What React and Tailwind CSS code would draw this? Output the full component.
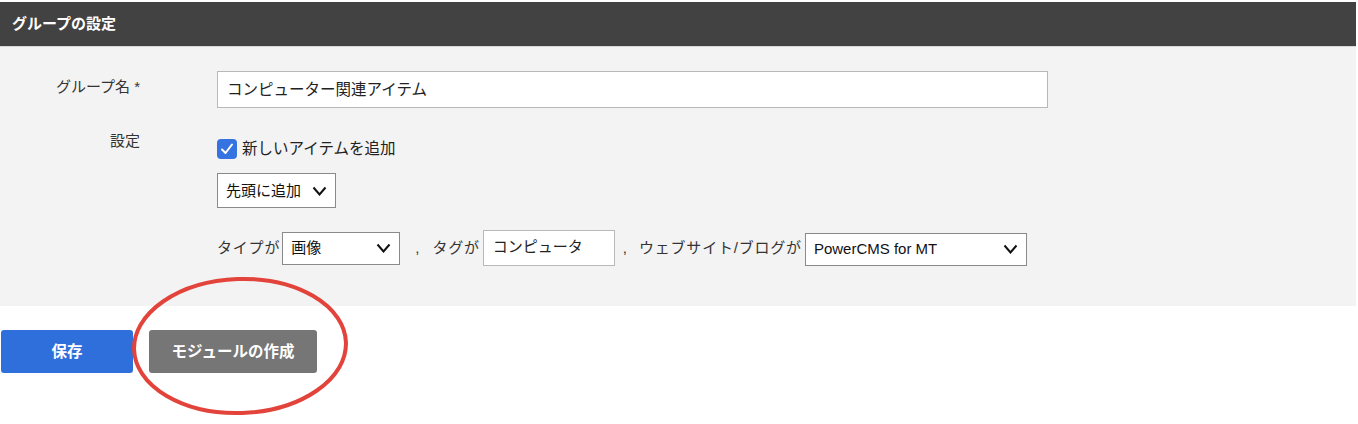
import React from 'react'

const font = { fontFamily: '"Liberation Sans", "Noto Sans CJK JP", sans-serif' }

const Chevron = ({ className = '' }) => (
  <svg className={className} width="15" height="10" viewBox="0 0 15 10" fill="none">
    <polyline points="1.5,1.5 7.5,8.5 13.5,1.5" stroke="#111" strokeWidth="2" strokeLinejoin="miter" />
  </svg>
)

const Select = ({ value, className = '' }) => (
  <div className={`flex items-center justify-between bg-white border border-[#8a8a8a] pl-[8px] pr-[8px] text-[15px] text-[#111] ${className}`}>
    <span>{value}</span>
    <Chevron />
  </div>
)

const App = () => {
  return (
    <div className="relative w-[1358px] h-[424px] bg-white" style={font}>
      <div className="w-[1356px] pt-[2px]">
        {/* Header */}
        <div className="h-[45px] bg-[#424242] flex items-center px-[12px] border-b border-[#d8d8d8]">
          <h2 className="text-[15px] font-bold text-white">グループの設定</h2>
        </div>

        {/* Body */}
        <div className="h-[259px] bg-[#f3f3f3] pt-[24px]">
          <div className="flex">
            <div className="w-[140px] text-right text-[15px] text-[#333] pt-[5px]">グループ名 *</div>
            <div className="ml-[77px] w-[831px] h-[37px] bg-white border border-[#b8b8b8] flex items-center px-[9px] text-[15.5px] text-[#222]">
              コンピューター関連アイテム
            </div>
          </div>

          <div className="flex mt-[25px]">
            <div className="w-[140px] text-right text-[15px] text-[#333] -mt-[3px]">設定</div>
            <div className="ml-[77px]">
              <div className="flex items-center mt-[4px]">
                <div className="w-[20px] h-[20px] rounded-[4px] bg-[#3574e0] flex items-center justify-center">
                  <svg width="14" height="12" viewBox="0 0 14 12" fill="none">
                    <polyline points="2,6.5 5.5,10 12,1.5" stroke="white" strokeWidth="2" strokeLinecap="round" strokeLinejoin="round" />
                  </svg>
                </div>
                <span className="ml-[5px] text-[15.5px] text-[#222]">新しいアイテムを追加</span>
              </div>

              <Select value="先頭に追加" className="mt-[13px] w-[119px] h-[35px] gap-2" />

              <div className="flex items-center mt-[22px] text-[15px] text-[#333]">
                <span className="tracking-[0.8px]">タイプが</span>
                <Select value="画像" className="ml-[2px] w-[118px] h-[33px]" />
                <span className="ml-[15px] text-[#333]">,</span>
                <span className="ml-[13px] tracking-[0.8px]">タグが</span>
                <div className="ml-[3px] w-[132px] h-[36px] bg-white border border-[#b8b8b8] px-[9px] pt-[5px] text-[15px] text-[#222]">
                  コンピュータ
                </div>
                <span className="ml-[8px] text-[#333]">,</span>
                <span className="ml-[12px] tracking-[0.8px]">ウェブサイト/ブログが</span>
                <Select value="PowerCMS for MT" className="ml-[3px] w-[222px] h-[33px] mt-[2px]" />
              </div>
            </div>
          </div>
        </div>

        {/* Buttons */}
        <div className="flex mt-[24px] pl-[1px] gap-[16px]">
          <button className="w-[132px] h-[43px] rounded-[3px] bg-[#2f6fdb] text-white text-[15.5px] font-bold">保存</button>
          <button className="w-[168px] h-[43px] rounded-[3px] bg-[#767676] text-white text-[15.5px] font-bold">モジュールの作成</button>
        </div>
      </div>

      {/* Annotation ellipse */}
      <svg className="absolute left-[131px] top-[276px]" width="218" height="140" viewBox="0 0 218 140" fill="none">
        <ellipse cx="109" cy="70" rx="106" ry="67" stroke="#e2433a" strokeWidth="4" transform="rotate(-2 109 70)" />
      </svg>
    </div>
  )
}

export default App
